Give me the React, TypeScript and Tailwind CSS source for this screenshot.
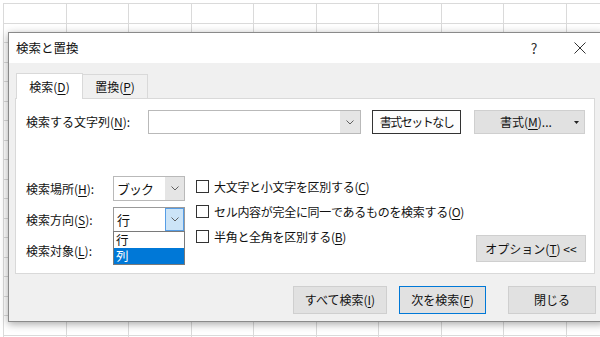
import React from "react";

const U = ({ c }: { c: string }) => (
  <span className="underline underline-offset-[2px] decoration-[1px]">{c}</span>
);

const Chevron = () => (
  <svg width="8" height="5" viewBox="0 0 8 5" fill="none">
    <polyline points="0.5,0.5 4,4 7.5,0.5" stroke="#606060" strokeWidth="1" />
  </svg>
);

const Checkbox = ({ children }: { children: React.ReactNode }) => (
  <div className="flex items-center h-[25px]">
    <div className="w-[13px] h-[13px] border border-[#333333] bg-white shrink-0" />
    <span className="ml-[5px] whitespace-nowrap tracking-[-0.3px]">{children}</span>
  </div>
);

export default function App() {
  const rows = Array.from({ length: 18 });
  const cols = Array.from({ length: 10 });
  return (
    <div
      className="relative w-[600px] h-[337px] overflow-hidden bg-white text-[12px] text-[#111]"
      style={{ fontFamily: '"Noto Sans CJK JP", "Noto Sans", sans-serif' }}
    >
      {/* spreadsheet background */}
      <div className="pl-[3px] pt-[3px]">
        <div className="grid grid-cols-[repeat(10,62.5px)] border-l border-t border-[#dadada]">
          {rows.map((_, r) =>
            cols.map((_, c) => (
              <div key={`${r}-${c}`} className="h-[19.5px] border-r border-b border-[#dadada]" />
            ))
          )}
        </div>
      </div>

      {/* dialog */}
      <div className="absolute left-[8px] top-[32px] w-[597px] h-[290px] border border-[#8a8a8a] bg-[#f0f0f0] shadow-[0_2px_8px_rgba(0,0,0,0.35)] flex flex-col">
        {/* title bar */}
        <div className="h-[30px] bg-white flex items-center shrink-0">
          <span className="pl-[7px] pt-[1px] text-[12.5px]">検索と置換</span>
          <div className="ml-auto w-[46px] h-full flex items-center justify-center text-[14px] text-[#333]">?</div>
          <div className="w-[46px] h-full flex items-center justify-center mr-[1px]">
            <svg width="12" height="12" viewBox="0 0 12 12">
              <line x1="0.5" y1="0.5" x2="11.5" y2="11.5" stroke="#333" strokeWidth="1" />
              <line x1="11.5" y1="0.5" x2="0.5" y2="11.5" stroke="#333" strokeWidth="1" />
            </svg>
          </div>
        </div>

        {/* tabs */}
        <div className="flex items-end pl-[7px] pt-[10px] h-[35px] shrink-0">
          <div className="relative z-10 w-[67px] h-[26px] -mb-px bg-white border border-b-0 border-[#d9d9d9] flex items-center justify-center">
            <span>
              検索(<U c="D" />)
            </span>
          </div>
          <div className="w-[65px] h-[24px] bg-[#f0f0f0] border border-l-0 border-b-0 border-[#d9d9d9] flex items-center justify-center">
            <span>
              置換(<U c="P" />)
            </span>
          </div>
        </div>

        {/* panel */}
        <div className="ml-[6px] w-[580px] h-[176px] bg-white border border-[#d9d9d9] shrink-0 pl-[10px] pr-[8px]">
          {/* row 1 */}
          <div className="flex items-center mt-[11px] h-[24px]">
            <div className="w-[122px] whitespace-nowrap">
              検索する文字列(<U c="N" />):
            </div>
            <div className="w-[213px] h-[24px] border border-[#b9b9b9] bg-white flex justify-end">
              <div className="w-[20px] h-full bg-[#e5e5e5] flex items-center justify-center">
                <Chevron />
              </div>
            </div>
            <div className="ml-[11px] w-[89px] h-[24px] border border-[#333333] bg-[#fdfdfd] flex items-center justify-center whitespace-nowrap tracking-[-1.5px]">
              書式セットなし
            </div>
            <div className="ml-[13px] w-[111px] h-[24px] border border-[#cfcfcf] bg-[#e1e1e1] flex items-center relative">
              <span className="ml-[25px] whitespace-nowrap">
                書式(<U c="M" />)...
              </span>
              <svg className="ml-auto mr-[5px]" width="5" height="3" viewBox="0 0 5 3">
                <polygon points="0,0 5,0 2.5,3" fill="#222" />
              </svg>
            </div>
          </div>

          {/* row 2 */}
          <div className="flex items-start mt-[40px]">
            <div className="flex pt-[2px]">
              <div className="w-[87px] flex flex-col gap-[6px]">
                <div className="h-[25px] flex items-center whitespace-nowrap">
                  検索場所(<U c="H" />):
                </div>
                <div className="h-[25px] flex items-center whitespace-nowrap">
                  検索方向(<U c="S" />):
                </div>
                <div className="h-[25px] flex items-center whitespace-nowrap">
                  検索対象(<U c="L" />):
                </div>
              </div>
              <div className="w-[72px] flex flex-col gap-[6px]">
                <div className="h-[25px] border border-[#b9b9b9] bg-white flex">
                  <span className="flex-1 flex items-center pl-[3px] text-[13px] tracking-[-1px]">ブック</span>
                  <div className="w-[19px] h-full bg-[#e5e5e5] flex items-center justify-center">
                    <Chevron />
                  </div>
                </div>
                <div className="relative h-[25px] border border-[#9a9a9a] bg-white flex">
                  <span className="flex-1 flex items-center pl-[3px] text-[13px]">行</span>
                  <div className="w-[19px] h-full bg-[#cce4f7] border border-[#569de5] flex items-center justify-center">
                    <Chevron />
                  </div>
                  <div className="absolute left-[-1px] right-[-1px] top-full z-20 h-[34px] border border-[#7a7a7a] bg-white flex flex-col">
                    <div className="h-[16px] flex items-center pl-[2px] text-[12.5px] leading-[16px]">行</div>
                    <div className="h-[16px] bg-[#0078d7] text-white flex items-center pl-[2px] text-[12.5px] leading-[16px]">列</div>
                  </div>
                </div>
                <div className="h-[25px] border border-[#b9b9b9] bg-white" />
              </div>
            </div>
            <div className="ml-[11px] flex flex-col">
              <Checkbox>
                大文字と小文字を区別する(<U c="C" />)
              </Checkbox>
              <Checkbox>
                セル内容が完全に同一であるものを検索する(<U c="O" />)
              </Checkbox>
              <Checkbox>
                半角と全角を区別する(<U c="B" />)
              </Checkbox>
            </div>
            <div className="ml-auto mt-[61px] w-[110px] h-[27px] border border-[#cfcfcf] bg-[#e1e1e1] flex items-center justify-center whitespace-nowrap">
              オプション(<U c="T" />) &lt;&lt;
            </div>
          </div>
        </div>

        {/* bottom buttons */}
        <div className="flex mt-[12px] ml-[284px]">
          <div className="w-[94px] h-[28px] border border-[#cfcfcf] bg-[#e1e1e1] flex items-center justify-center whitespace-nowrap">
            すべて検索(<U c="I" />)
          </div>
          <div className="ml-[12px] w-[87px] h-[28px] border border-[#0078d7] bg-[#e1e1e1] flex items-center justify-center whitespace-nowrap">
            次を検索(<U c="F" />)
          </div>
          <div className="ml-[22px] w-[88px] h-[28px] border border-[#cfcfcf] bg-[#e1e1e1] flex items-center justify-center whitespace-nowrap">
            閉じる
          </div>
        </div>
      </div>
    </div>
  );
}
